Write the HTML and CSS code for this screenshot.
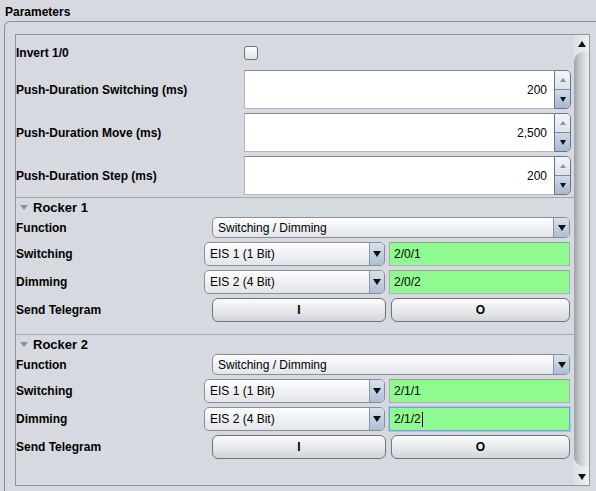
FILE: index.html
```html
<!DOCTYPE html>
<html lang="en">
<head>
    <meta charset="UTF-8">
    <meta name="viewport" content="width=device-width, initial-scale=1.0">
    <title>Parameters</title>
    <link rel="stylesheet" href="styles.css">
</head>
<body>

    <div class="panel-title">Parameters</div>

    <div class="panel">
        <div class="scroll-pane">
            <div class="viewport">

                <div class="params">
                    <div class="param-row check-row">
                        <span class="param-label">Invert 1/0</span>
                        <span class="checkbox"></span>
                    </div>
                    <div class="param-row">
                        <span class="param-label">Push-Duration Switching (ms)</span>
                        <div class="spinner">
                            <div class="spin-field">200</div>
                            <div class="spin-btns">
                                <span class="spin-up"><i class="tri-up small"></i></span>
                                <span class="spin-down"><i class="tri-down small"></i></span>
                            </div>
                        </div>
                    </div>
                    <div class="param-row">
                        <span class="param-label">Push-Duration Move (ms)</span>
                        <div class="spinner">
                            <div class="spin-field">2,500</div>
                            <div class="spin-btns">
                                <span class="spin-up"><i class="tri-up small"></i></span>
                                <span class="spin-down"><i class="tri-down small"></i></span>
                            </div>
                        </div>
                    </div>
                    <div class="param-row">
                        <span class="param-label">Push-Duration Step (ms)</span>
                        <div class="spinner">
                            <div class="spin-field">200</div>
                            <div class="spin-btns">
                                <span class="spin-up"><i class="tri-up small"></i></span>
                                <span class="spin-down"><i class="tri-down small"></i></span>
                            </div>
                        </div>
                    </div>
                </div>

                <div class="rocker">
                    <div class="rocker-head"><i class="tri-fold"></i>Rocker 1</div>
                    <div class="rocker-row func-row">
                        <span class="rocker-label">Function</span>
                        <div class="combo">
                            <span class="combo-text">Switching / Dimming</span>
                            <span class="combo-arrow"><i class="tri-down"></i></span>
                        </div>
                    </div>
                    <div class="rocker-row obj-row">
                        <span class="rocker-label">Switching</span>
                        <div class="combo combo-obj">
                            <span class="combo-text">EIS 1 (1 Bit)</span>
                            <span class="combo-arrow"><i class="tri-down"></i></span>
                        </div>
                        <div class="ga-field">2/0/1</div>
                    </div>
                    <div class="rocker-row obj-row">
                        <span class="rocker-label">Dimming</span>
                        <div class="combo combo-obj">
                            <span class="combo-text">EIS 2 (4 Bit)</span>
                            <span class="combo-arrow"><i class="tri-down"></i></span>
                        </div>
                        <div class="ga-field">2/0/2</div>
                    </div>
                    <div class="rocker-row">
                        <span class="rocker-label">Send Telegram</span>
                        <button class="btn btn-on">I</button>
                        <button class="btn btn-off">O</button>
                    </div>
                </div>

                <div class="rocker">
                    <div class="rocker-head"><i class="tri-fold"></i>Rocker 2</div>
                    <div class="rocker-row func-row">
                        <span class="rocker-label">Function</span>
                        <div class="combo">
                            <span class="combo-text">Switching / Dimming</span>
                            <span class="combo-arrow"><i class="tri-down"></i></span>
                        </div>
                    </div>
                    <div class="rocker-row obj-row">
                        <span class="rocker-label">Switching</span>
                        <div class="combo combo-obj">
                            <span class="combo-text">EIS 1 (1 Bit)</span>
                            <span class="combo-arrow"><i class="tri-down"></i></span>
                        </div>
                        <div class="ga-field">2/1/1</div>
                    </div>
                    <div class="rocker-row obj-row">
                        <span class="rocker-label">Dimming</span>
                        <div class="combo combo-obj">
                            <span class="combo-text">EIS 2 (4 Bit)</span>
                            <span class="combo-arrow"><i class="tri-down"></i></span>
                        </div>
                        <div class="ga-field focused">2/1/2<span class="caret"></span></div>
                    </div>
                    <div class="rocker-row">
                        <span class="rocker-label">Send Telegram</span>
                        <button class="btn btn-on">I</button>
                        <button class="btn btn-off">O</button>
                    </div>
                </div>

            </div>

            <div class="scrollbar">
                <span class="sb-btn"><i class="tri-up"></i></span>
                <span class="sb-thumb"></span>
                <span class="sb-btn sb-bottom"><i class="tri-down"></i></span>
            </div>
        </div>
    </div>

</body>
</html>
```

FILE: styles.css
```css
* {
    box-sizing: border-box;
}
body {
    margin: 0;
    width: 596px;
    height: 491px;
    overflow: hidden;
    background-color: #d6d9df;
    font-family: "Liberation Sans", Arial, sans-serif;
    font-size: 12px;
    color: #000;
}

.panel-title {
    height: 21px;
    padding: 5px 0 0 5px;
    line-height: 15px;
    font-weight: bold;
}
.panel {
    margin-left: 4px;
    width: 620px;
    height: 480px;
    padding: 12px 0 0 10px;
    border-top: 1px solid #8e9196;
    border-left: 1px solid #8e9196;
    border-top-left-radius: 6px;
}
.scroll-pane {
    display: flex;
    width: 575px;
    height: 452px;
    border: 1px solid #8f949b;
    overflow: hidden;
}
.viewport {
    width: 558px;
    overflow: hidden;
}

/* triangles */
.tri-up, .tri-down {
    display: block;
    width: 0;
    height: 0;
    border-left: 4px solid transparent;
    border-right: 4px solid transparent;
}
.tri-up {
    border-bottom: 6px solid #111;
}
.tri-down {
    border-top: 6px solid #111;
}
.tri-up.small {
    border-left-width: 3px;
    border-right-width: 3px;
    border-bottom: 4px solid #8e9298;
}
.tri-down.small {
    border-left-width: 3px;
    border-right-width: 3px;
    border-top-width: 5px;
}
.tri-fold {
    display: inline-block;
    width: 0;
    height: 0;
    margin-right: 5px;
    border-left: 4px solid transparent;
    border-right: 4px solid transparent;
    border-top: 5px solid #8c9096;
}

/* top parameters */
.params {
    padding-right: 3px;
}
.param-row {
    display: flex;
    align-items: center;
    height: 39px;
    margin-bottom: 4px;
}
.param-row:last-child {
    margin-bottom: 2px;
}
.check-row {
    height: 35px;
    margin-bottom: 0;
}
.param-label {
    width: 228px;
    font-weight: bold;
}
.checkbox {
    width: 14px;
    height: 14px;
    border: 1px solid #6d7177;
    border-radius: 3px;
    background: linear-gradient(#ffffff, #dfe2e6);
}
.spinner {
    flex: 1;
    display: flex;
    height: 39px;
}
.spin-field {
    flex: 1;
    display: flex;
    align-items: center;
    justify-content: flex-end;
    padding-right: 7px;
    background-color: #fff;
    border: 1px solid #b3b6bb;
    border-top-color: #84878c;
    border-right: none;
}
.spin-btns {
    display: flex;
    flex-direction: column;
    width: 17px;
    border: 1px solid #66768a;
    border-radius: 0 5px 5px 0;
    overflow: hidden;
}
.spin-up, .spin-down {
    flex: 1;
    display: flex;
    align-items: center;
    justify-content: center;
}
.spin-up {
    background: linear-gradient(#f3f5f8, #dde3ea);
    border-bottom: 1px solid #7b889a;
}
.spin-down {
    background: linear-gradient(#cfdae7, #a6b9cf);
}

/* rocker sections */
.rocker {
    padding: 0 4px 12px 0;
    border-top: 1px solid #a4a7ac;
}
.rocker-head {
    display: flex;
    align-items: center;
    height: 19px;
    padding-left: 4px;
    font-weight: bold;
    font-size: 13px;
}
.rocker-row {
    display: flex;
    align-items: center;
    height: 24px;
    margin-top: 4px;
}
.func-row {
    height: 21px;
    margin-top: 0;
}
.rocker-label {
    width: 196px;
    font-weight: bold;
}
.obj-row .rocker-label {
    width: 188px;
}

.combo {
    flex: 1;
    display: flex;
    height: 100%;
    border: 1px solid #8a8f97;
    border-radius: 5px;
    background: linear-gradient(#fdfdfe, #e2e5e9);
    overflow: hidden;
}
.combo-obj {
    flex: none;
    width: 181px;
}
.combo-text {
    flex: 1;
    display: flex;
    align-items: center;
    padding-left: 5px;
}
.combo-arrow {
    display: flex;
    align-items: center;
    justify-content: center;
    width: 16px;
    border-left: 1px solid #8a96a6;
    background: linear-gradient(#d8e2ed, #aebfd3);
}
.combo-obj .combo-arrow {
    width: 15px;
}

.ga-field {
    flex: 1;
    display: flex;
    align-items: center;
    height: 100%;
    margin-left: 4px;
    padding-left: 4px;
    background-color: #8ffa8f;
    border: 1px solid #aab0ab;
    border-top-color: #979c98;
}
.ga-field.focused {
    border-color: #7aa2da;
    box-shadow: 0 0 0 1px #a9c4e8;
}
.caret {
    width: 1px;
    height: 15px;
    margin-left: 1px;
    background-color: #000;
}

.btn {
    display: flex;
    align-items: center;
    justify-content: center;
    height: 100%;
    padding: 0;
    font-family: inherit;
    font-size: 12px;
    font-weight: bold;
    color: #000;
    border: 1px solid #6f737a;
    border-radius: 6px;
    background: linear-gradient(#fbfbfc, #e5e7ea 55%, #d2d5da);
}
.btn-on {
    width: 174px;
}
.btn-off {
    flex: 1;
    margin-left: 5px;
}

/* scrollbar */
.scrollbar {
    display: flex;
    flex-direction: column;
    width: 15px;
    background-color: #e4e6e9;
}
.sb-btn {
    display: flex;
    align-items: center;
    justify-content: center;
    height: 17px;
    background: linear-gradient(to right, #dcdfe3, #eef0f2);
}
.sb-bottom {
    height: 19px;
    padding-top: 2px;
}
.sb-thumb {
    flex: 1;
    border-radius: 8px 0 0 8px / 10px 0 0 10px;
    background: linear-gradient(to right, #9ea2a8, #c4c7cc 35%, #e2e4e7 80%, #eceef0);
}
```
